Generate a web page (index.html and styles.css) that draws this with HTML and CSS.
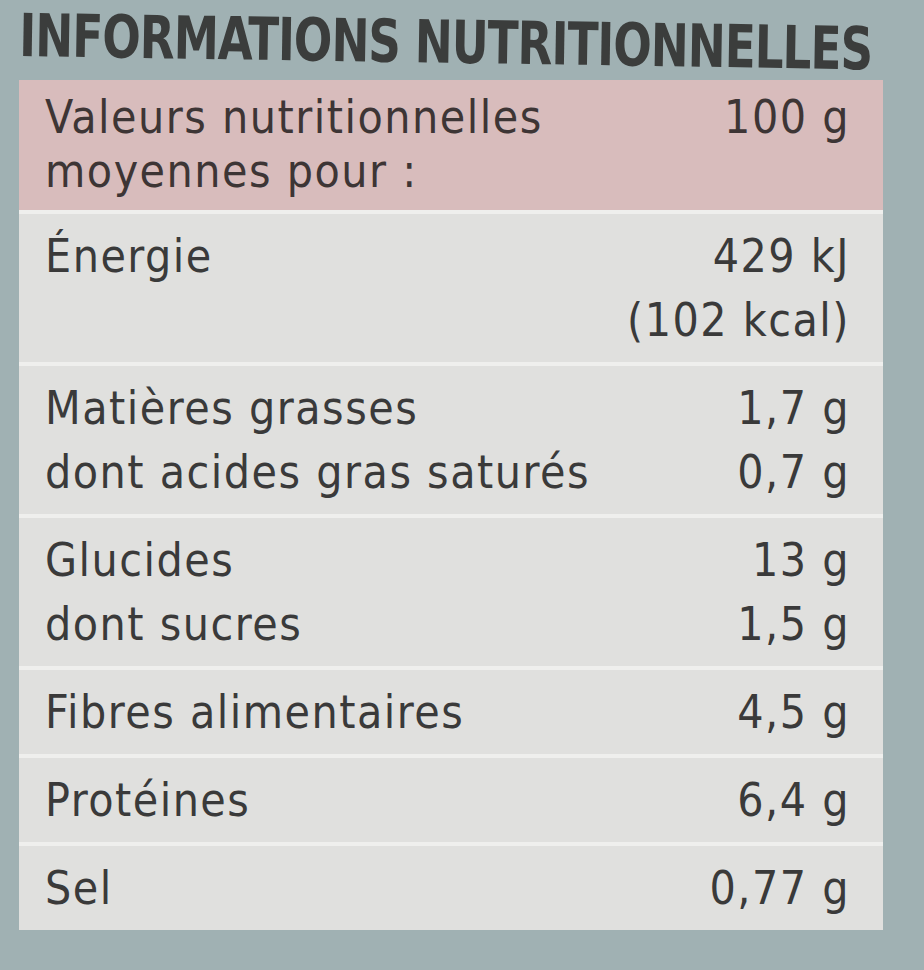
FILE: index.html
```html
<!DOCTYPE html>
<html lang="fr">
<head>
<meta charset="utf-8">
<title>Informations nutritionnelles</title>
<link rel="stylesheet" href="styles.css">
</head>
<body>
<div class="page">
  <h1 class="title">INFORMATIONS NUTRITIONNELLES</h1>
  <div class="table">
    <div class="row head">
      <div class="label">Valeurs nutritionnelles<br>moyennes pour :</div>
      <div class="value">100 g</div>
    </div>
    <div class="row">
      <div class="label">Énergie</div>
      <div class="value">429 kJ<br>(102 kcal)</div>
    </div>
    <div class="row">
      <div class="label">Matières grasses<br>dont acides gras saturés</div>
      <div class="value">1,7 g<br>0,7 g</div>
    </div>
    <div class="row">
      <div class="label">Glucides<br>dont sucres</div>
      <div class="value">13 g<br>1,5 g</div>
    </div>
    <div class="row">
      <div class="label">Fibres alimentaires</div>
      <div class="value">4,5 g</div>
    </div>
    <div class="row">
      <div class="label">Protéines</div>
      <div class="value">6,4 g</div>
    </div>
    <div class="row">
      <div class="label">Sel</div>
      <div class="value">0,77 g</div>
    </div>
  </div>
</div>
</body>
</html>
```
FILE: styles.css
```css
html, body {
  margin: 0;
  padding: 0;
}
body {
  width: 924px;
  height: 970px;
  overflow: hidden;
  background: #a0b1b3;
  font-family: "DejaVu Sans Condensed", "DejaVu Sans", sans-serif;
  color: #3a3a3a;
}
.page {
  display: flex;
  flex-direction: column;
}
.title {
  margin: 0;
  height: 80px;
  padding-left: 20px;
  font-family: "DejaVu Sans Condensed", "DejaVu Sans", sans-serif;
  font-weight: bold;
  font-size: 53px;
  line-height: 64px;
  letter-spacing: -1px;
  color: #3b3d3c;
  white-space: nowrap;
  transform: rotate(0.9deg) scaleX(0.95) scaleY(1.12);
  transform-origin: 20px 0;
}
.table {
  margin-left: 19px;
  width: 864px;
  display: flex;
  flex-direction: column;
  gap: 4px;
  background: #efefed;
}
.row {
  display: flex;
  justify-content: space-between;
  align-items: flex-start;
  padding: 10px 33px 10px 26px;
  font-size: 46px;
  line-height: 64px;
  letter-spacing: 1.5px;
  background: #e0e0de;
}
.row.head {
  padding-top: 10px;
  padding-bottom: 12px;
  line-height: 54px;
  background: #d8bcbc;
  color: #3d3535;
}
.value {
  text-align: right;
}
```
